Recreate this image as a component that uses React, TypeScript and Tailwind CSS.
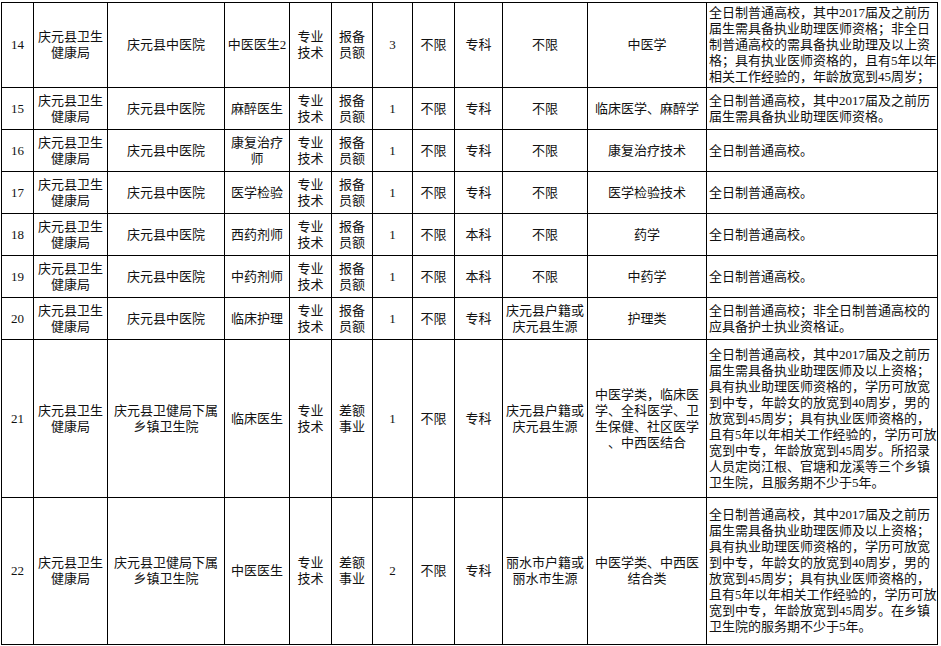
import React from "react";

type Row = {
  no: string;
  dept: string[];
  unit: string[];
  pos: string[];
  type: string[];
  quota: string[];
  count: string;
  age: string;
  edu: string;
  hukou: string[];
  major: string[];
  other: string[];
  h: string;
};

const DEPT = ["庆元县卫生", "健康局"];
const TCM = ["庆元县中医院"];
const TECH = ["专业", "技术"];
const FILED = ["报备", "员额"];
const DIFF = ["差额", "事业"];
const TOWN = ["庆元县卫健局下属", "乡镇卫生院"];

const ROWS: Row[] = [
  {
    no: "14", dept: DEPT, unit: TCM, pos: ["中医医生2"], type: TECH, quota: FILED,
    count: "3", age: "不限", edu: "专科", hukou: ["不限"], major: ["中医学"],
    other: [
      "全日制普通高校，其中2017届及之前历",
      "届生需具备执业助理医师资格；非全日",
      "制普通高校的需具备执业助理及以上资",
      "格；具有执业医师资格的，且有5年以年",
      "相关工作经验的，年龄放宽到45周岁；",
    ],
    h: "h-[85px]",
  },
  {
    no: "15", dept: DEPT, unit: TCM, pos: ["麻醉医生"], type: TECH, quota: FILED,
    count: "1", age: "不限", edu: "专科", hukou: ["不限"], major: ["临床医学、麻醉学"],
    other: ["全日制普通高校，其中2017届及之前历", "届生需具备执业助理医师资格。"],
    h: "h-[42px]",
  },
  {
    no: "16", dept: DEPT, unit: TCM, pos: ["康复治疗", "师"], type: TECH, quota: FILED,
    count: "1", age: "不限", edu: "专科", hukou: ["不限"], major: ["康复治疗技术"],
    other: ["全日制普通高校。"],
    h: "h-[42px]",
  },
  {
    no: "17", dept: DEPT, unit: TCM, pos: ["医学检验"], type: TECH, quota: FILED,
    count: "1", age: "不限", edu: "专科", hukou: ["不限"], major: ["医学检验技术"],
    other: ["全日制普通高校。"],
    h: "h-[42px]",
  },
  {
    no: "18", dept: DEPT, unit: TCM, pos: ["西药剂师"], type: TECH, quota: FILED,
    count: "1", age: "不限", edu: "本科", hukou: ["不限"], major: ["药学"],
    other: ["全日制普通高校。"],
    h: "h-[42px]",
  },
  {
    no: "19", dept: DEPT, unit: TCM, pos: ["中药剂师"], type: TECH, quota: FILED,
    count: "1", age: "不限", edu: "本科", hukou: ["不限"], major: ["中药学"],
    other: ["全日制普通高校。"],
    h: "h-[42px]",
  },
  {
    no: "20", dept: DEPT, unit: TCM, pos: ["临床护理"], type: TECH, quota: FILED,
    count: "1", age: "不限", edu: "专科", hukou: ["庆元县户籍或", "庆元县生源"], major: ["护理类"],
    other: ["全日制普通高校；非全日制普通高校的", "应具备护士执业资格证。"],
    h: "h-[42px]",
  },
  {
    no: "21", dept: DEPT, unit: TOWN, pos: ["临床医生"], type: TECH, quota: DIFF,
    count: "1", age: "不限", edu: "专科", hukou: ["庆元县户籍或", "庆元县生源"],
    major: ["中医学类，临床医", "学、全科医学、卫", "生保健、社区医学", "、中西医结合"],
    other: [
      "全日制普通高校，其中2017届及之前历",
      "届生需具备执业助理医师及以上资格；",
      "具有执业助理医师资格的，学历可放宽",
      "到中专，年龄女的放宽到40周岁，男的",
      "放宽到45周岁；具有执业医师资格的，",
      "且有5年以年相关工作经验的，学历可放",
      "宽到中专，年龄放宽到45周岁。所招录",
      "人员定岗江根、官塘和龙溪等三个乡镇",
      "卫生院，且服务期不少于5年。",
    ],
    h: "h-[158px]",
  },
  {
    no: "22", dept: DEPT, unit: TOWN, pos: ["中医医生"], type: TECH, quota: DIFF,
    count: "2", age: "不限", edu: "专科", hukou: ["丽水市户籍或", "丽水市生源"],
    major: ["中医学类、中西医", "结合类"],
    other: [
      "全日制普通高校，其中2017届及之前历",
      "届生需具备执业助理医师及以上资格；",
      "具有执业助理医师资格的，学历可放宽",
      "到中专，年龄女的放宽到40周岁，男的",
      "放宽到45周岁；具有执业医师资格的，",
      "且有5年以年相关工作经验的，学历可放",
      "宽到中专，年龄放宽到45周岁。在乡镇",
      "卫生院的服务期不少于5年。",
    ],
    h: "h-[147px]",
  },
];

const Lines = ({ lines }: { lines: string[] }) => (
  <>
    {lines.map((l, i) => (
      <div key={i} className="whitespace-nowrap">
        {l}
      </div>
    ))}
  </>
);

const cell = "border border-black p-0 text-center align-middle";

const App = () => {
  return (
    <div className="h-[646px] w-[941px] overflow-hidden bg-white pt-[2px] pl-[1px] font-['Liberation_Serif','Noto_Sans_CJK_SC',serif] text-[13px] leading-[16px] text-[#111]">
      <table className="w-[936px] table-fixed border-collapse">
        <colgroup>
          <col className="w-[32px]" />
          <col className="w-[74px]" />
          <col className="w-[117px]" />
          <col className="w-[65px]" />
          <col className="w-[42px]" />
          <col className="w-[41px]" />
          <col className="w-[40px]" />
          <col className="w-[42px]" />
          <col className="w-[48px]" />
          <col className="w-[85px]" />
          <col className="w-[119px]" />
          <col className="w-[231px]" />
        </colgroup>
        <tbody>
          {ROWS.map((r) => (
            <tr key={r.no} className={r.h}>
              <td className={cell}>{r.no}</td>
              <td className={cell}><Lines lines={r.dept} /></td>
              <td className={cell}><Lines lines={r.unit} /></td>
              <td className={cell}><Lines lines={r.pos} /></td>
              <td className={cell}><Lines lines={r.type} /></td>
              <td className={cell}><Lines lines={r.quota} /></td>
              <td className={cell}>{r.count}</td>
              <td className={cell}>{r.age}</td>
              <td className={cell}>{r.edu}</td>
              <td className={cell}><Lines lines={r.hukou} /></td>
              <td className={cell}><Lines lines={r.major} /></td>
              <td className="border border-black py-0 pr-0 pl-[2px] text-left align-middle">
                <Lines lines={r.other} />
              </td>
            </tr>
          ))}
        </tbody>
      </table>
    </div>
  );
};

export default App;
